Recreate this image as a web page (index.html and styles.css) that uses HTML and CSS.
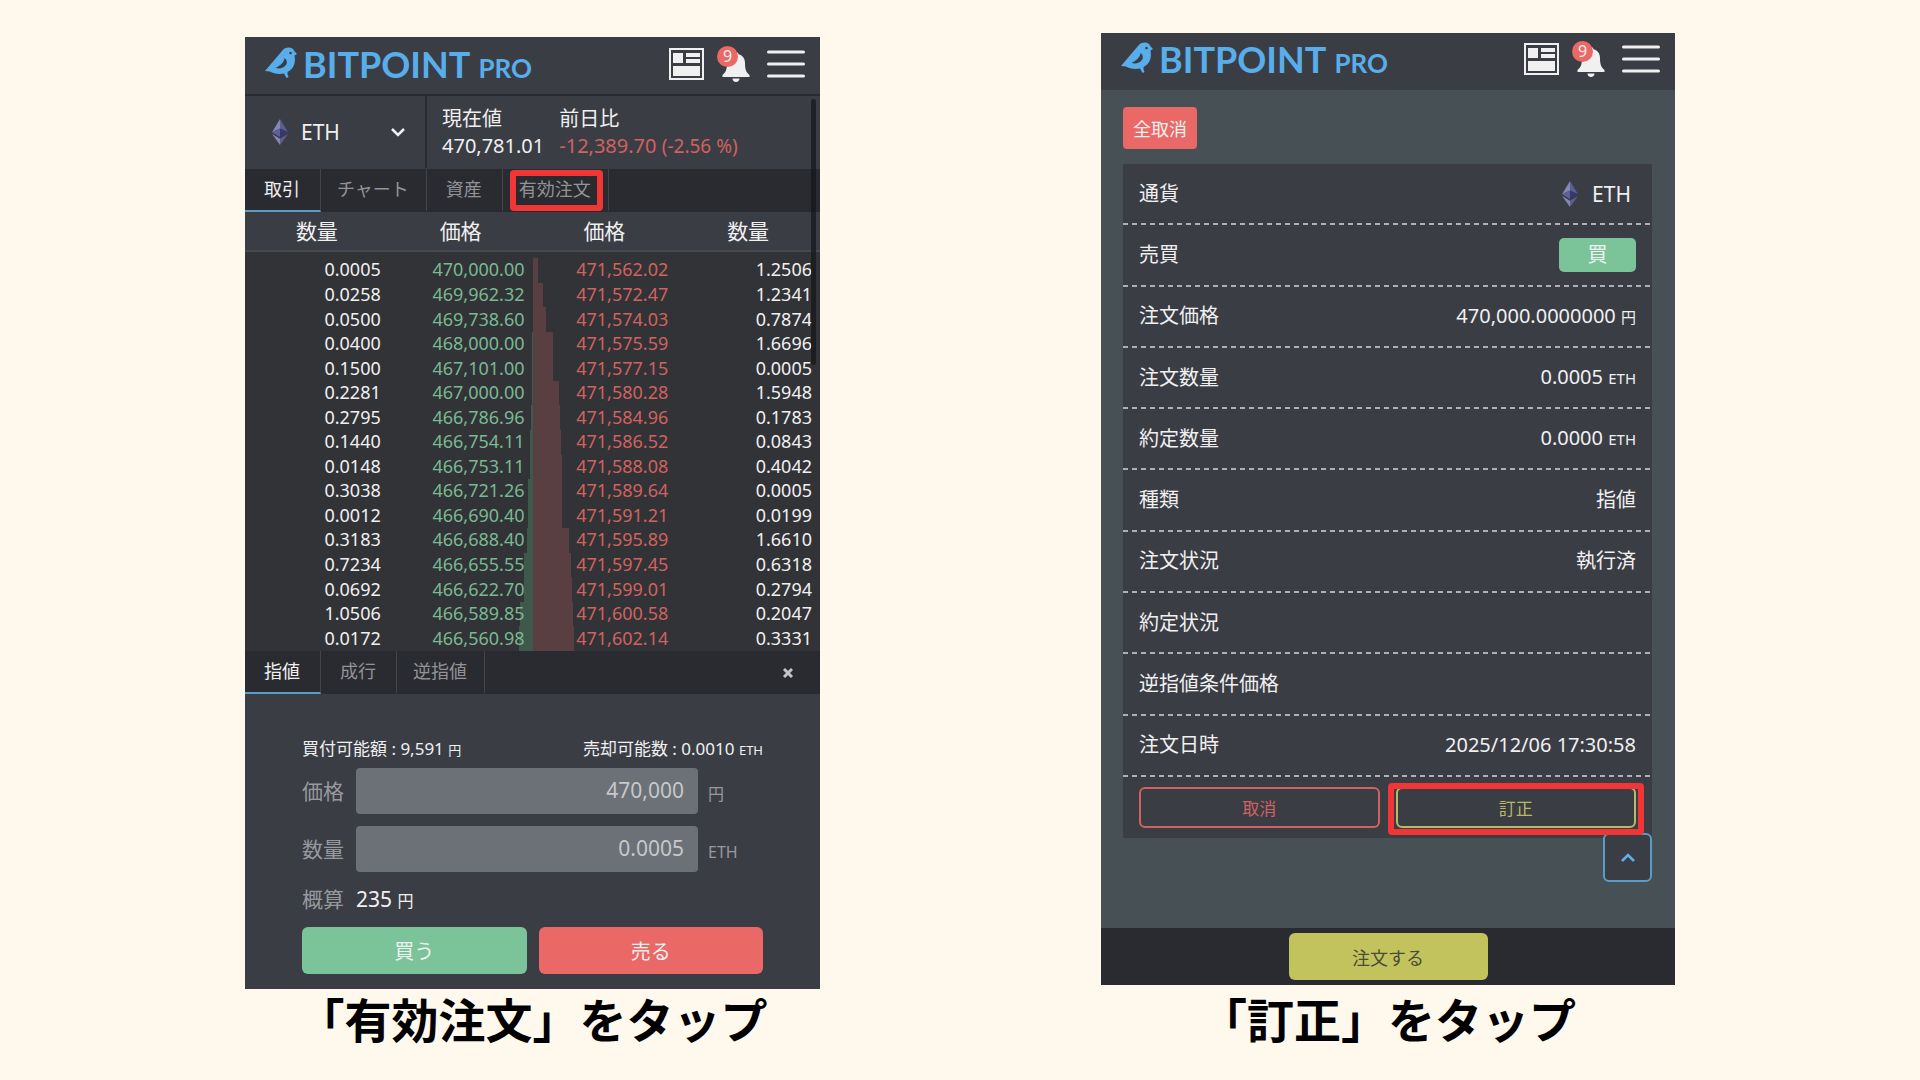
FILE: index.html
```html
<!DOCTYPE html>
<html lang="ja">
<head>
    <meta charset="UTF-8">
    <meta name="viewport" content="width=device-width, initial-scale=1.0">
    <title>BITPOINT PRO 注文の訂正</title>
    <link rel="stylesheet" href="styles.css">
</head>
<body>
    <!-- Shared icons -->
    <svg class="sprite" aria-hidden="true">
        <symbol id="bird" viewBox="0 -1 33 32">
            <path fill-rule="evenodd" d="M0 24 L17 4 C18.500 1.500 21 0.500 24 0.500 C26.500 0.500 28.500 2 29.200 4 L32 7 L29.500 8.500 C31 16 28.500 22 22.500 25 L22.500 27 L23.500 30 L21.500 31 L19 26.500 C14 27.500 8 26.500 5 24.500 Z M19.500 11 C19 15 16 18.500 10.500 20.800 C14 22.500 19 21 21.300 17.500 C22.500 15 21.800 12.500 19.500 11 Z M25.500 4.700 A1.300 1.300 0 1 0 25.600 4.700 Z"/>
        </symbol>
        <symbol id="news" viewBox="0 0 35 32">
            <path fill-rule="evenodd" d="M0 0 H35 V32 H0 Z M2 2 V30 H33 V2 Z"/>
            <path d="M4 5 H14 V15 H4 Z M17 5 H31 V9 H17 Z M17 11 H31 V15 H17 Z M4 18 H31 V28 H4 Z"/>
        </symbol>
        <symbol id="bell" viewBox="0 0 28 30">
            <path d="M14 0 C15.500 0 16.500 1 16.500 2.300 C21 3.500 23 7 23 11 C23 18 24.500 20.500 27.500 23 V25 H0.500 V23 C3.500 20.500 5 18 5 11 C5 7 7 3.500 11.500 2.300 C11.500 1 12.500 0 14 0 Z M10.500 26.500 H17.500 C17.500 28.500 16 30 14 30 C12 30 10.500 28.500 10.500 26.500 Z"/>
        </symbol>
        <symbol id="menu" viewBox="0 0 38 28">
            <path d="M1.500 2 H36.500 M1.500 14 H36.500 M1.500 26 H36.500" stroke="currentColor" stroke-width="3" stroke-linecap="round"/>
        </symbol>
        <symbol id="eth" viewBox="0 0 16 26">
            <path d="M8 0 L0 13.200 L8 9.600 Z" fill="#8587b4"/>
            <path d="M8 0 L16 13.200 L8 9.600 Z" fill="#5c5e95"/>
            <path d="M8 9.600 L0 13.200 L8 18 Z" fill="#5f619b"/>
            <path d="M8 9.600 L16 13.200 L8 18 Z" fill="#37386f"/>
            <path d="M0 15 L8 19.700 V26 Z" fill="#8587b4"/>
            <path d="M16 15 L8 19.700 V26 Z" fill="#5c5e95"/>
        </symbol>
    </svg>

    <main class="steps">
        <figure class="step step-trade">
            <div class="phone">
                <header class="app-header bordered">
                    <a class="logo" href="#">
                        <svg class="logo-bird"><use href="#bird"/></svg>
                        <span class="logo-name">BITPOINT</span>
                        <span class="logo-pro">PRO</span>
                    </a>
                    <button class="icon-button" aria-label="ニュース"><svg class="icon-news"><use href="#news"/></svg></button>
                    <button class="icon-button bell" aria-label="お知らせ"><svg class="icon-bell"><use href="#bell"/></svg><span class="bell-count">9</span></button>
                    <button class="icon-button" aria-label="メニュー"><svg class="icon-menu"><use href="#menu"/></svg></button>
                </header>

                <div class="screen">
                    <div class="ticker">
                        <div class="pair">
                            <svg class="icon-eth"><use href="#eth"/></svg>
                            <select class="pair-select" aria-label="通貨">
                                <option>ETH</option>
                            </select>
                            <svg class="chevron" viewBox="0 0 16 10"><path d="M2 2 L8 8 L14 2"/></svg>
                        </div>
                        <dl class="quote">
                            <dt>現在値</dt>
                            <dd>470,781.01</dd>
                        </dl>
                        <dl class="quote">
                            <dt>前日比</dt>
                            <dd class="down">-12,389.70 <small>(-2.56 %)</small></dd>
                        </dl>
                    </div>

                    <nav class="tabs">
                        <button class="tab active">取引</button>
                        <button class="tab">チャート</button>
                        <button class="tab">資産</button>
                        <button class="tab marked">有効注文</button>
                    </nav>

                    <table class="book">
                        <thead>
                            <tr><th>数量</th><th>価格</th><th>価格</th><th>数量</th></tr>
                        </thead>
                        <tbody id="bookRows"></tbody>
                    </table>
                    <div class="scrollbar"></div>
                </div>

                <nav class="tabs">
                    <button class="tab active">指値</button>
                    <button class="tab">成行</button>
                    <button class="tab">逆指値</button>
                    <button class="tab-close" aria-label="閉じる"><svg viewBox="0 0 10 10"><path d="M1 1 L9 9 M9 1 L1 9"/></svg></button>
                </nav>

                <form class="order-form">
                    <div class="balance">
                        <span>買付可能額 : 9,591 <small>円</small></span>
                        <span>売却可能数 : 0.0010 <small>ETH</small></span>
                    </div>
                    <div class="field">
                        <label for="price">価格</label>
                        <input type="text" id="price" value="470,000">
                        <span class="unit">円</span>
                    </div>
                    <div class="field">
                        <label for="amount">数量</label>
                        <input type="text" id="amount" value="0.0005">
                        <span class="unit">ETH</span>
                    </div>
                    <div class="total">
                        <span class="total-label">概算</span>
                        <span>235 <small>円</small></span>
                    </div>
                    <div class="actions">
                        <button type="button" class="btn buy">買う</button>
                        <button type="button" class="btn sell">売る</button>
                    </div>
                </form>
            </div>
            <figcaption>「有効注文」をタップ</figcaption>
        </figure>

        <figure class="step step-edit">
            <div class="phone">
                <header class="app-header">
                    <a class="logo" href="#">
                        <svg class="logo-bird"><use href="#bird"/></svg>
                        <span class="logo-name">BITPOINT</span>
                        <span class="logo-pro">PRO</span>
                    </a>
                    <button class="icon-button" aria-label="ニュース"><svg class="icon-news"><use href="#news"/></svg></button>
                    <button class="icon-button bell" aria-label="お知らせ"><svg class="icon-bell"><use href="#bell"/></svg><span class="bell-count">9</span></button>
                    <button class="icon-button" aria-label="メニュー"><svg class="icon-menu"><use href="#menu"/></svg></button>
                </header>

                <div class="orders">
                    <button class="cancel-all">全取消</button>
                    <section class="order-card">
                        <dl class="details">
                            <div class="detail"><dt>通貨</dt><dd class="coin"><svg class="icon-eth"><use href="#eth"/></svg>ETH</dd></div>
                            <div class="detail"><dt>売買</dt><dd class="side">買</dd></div>
                            <div class="detail"><dt>注文価格</dt><dd>470,000.0000000 <small>円</small></dd></div>
                            <div class="detail"><dt>注文数量</dt><dd>0.0005 <small>ETH</small></dd></div>
                            <div class="detail"><dt>約定数量</dt><dd>0.0000 <small>ETH</small></dd></div>
                            <div class="detail"><dt>種類</dt><dd>指値</dd></div>
                            <div class="detail"><dt>注文状況</dt><dd>執行済</dd></div>
                            <div class="detail"><dt>約定状況</dt><dd></dd></div>
                            <div class="detail"><dt>逆指値条件価格</dt><dd></dd></div>
                            <div class="detail"><dt>注文日時</dt><dd>2025/12/06 17:30:58</dd></div>
                        </dl>
                        <div class="card-actions">
                            <button class="outline cancel">取消</button>
                            <button class="outline edit marked">訂正</button>
                        </div>
                        <button class="to-top" aria-label="上へ戻る"><svg class="chevron" viewBox="0 0 16 10"><path d="M2 8 L8 2 L14 8"/></svg></button>
                    </section>
                </div>

                <footer class="app-footer">
                    <button class="btn order">注文する</button>
                </footer>
            </div>
            <figcaption>「訂正」をタップ</figcaption>
        </figure>
    </main>

    <script>
        // 買数量, 買価格, 売価格, 売数量, 買の厚み(px), 売の厚み(px)
        const book = [
            ['0.0005', '470,000.00', '471,562.02', '1.2506', 0, 5],
            ['0.0258', '469,962.32', '471,572.47', '1.2341', 0, 10],
            ['0.0500', '469,738.60', '471,574.03', '0.7874', 0, 13],
            ['0.0400', '468,000.00', '471,575.59', '1.6696', 1, 20],
            ['0.1500', '467,101.00', '471,577.15', '0.0005', 1, 20],
            ['0.2281', '467,000.00', '471,580.28', '1.5948', 1, 26],
            ['0.2795', '466,786.96', '471,584.96', '0.1783', 2, 27],
            ['0.1440', '466,754.11', '471,586.52', '0.0843', 3, 28],
            ['0.0148', '466,753.11', '471,588.08', '0.4042', 3, 29],
            ['0.3038', '466,721.26', '471,589.64', '0.0005', 5, 29],
            ['0.0012', '466,690.40', '471,591.21', '0.0199', 5, 29],
            ['0.3183', '466,688.40', '471,595.89', '1.6610', 6, 36],
            ['0.7234', '466,655.55', '471,597.45', '0.6318', 9, 38],
            ['0.0692', '466,622.70', '471,599.01', '0.2794', 9, 39],
            ['1.0506', '466,589.85', '471,600.58', '0.2047', 13, 40],
            ['0.0172', '466,560.98', '471,602.14', '0.3331', 14, 41]
        ];

        document.getElementById('bookRows').innerHTML = book.map(row => `
            <tr>
                <td>${row[0]}</td>
                <td class="bid"><i class="depth" style="width: ${row[4]}px"></i><span>${row[1]}</span></td>
                <td class="ask"><i class="depth" style="width: ${row[5]}px"></i><span>${row[2]}</span></td>
                <td>${row[3]}</td>
            </tr>
        `).join('');
    </script>
</body>
</html>
```

FILE: styles.css
```css
* {
    margin: 0;
    padding: 0;
    box-sizing: border-box;
}

body {
    font-family: 'Noto Sans', 'Noto Sans CJK JP', sans-serif;
    background: #fff8ec;
    color: #f0f0f1;
    min-height: 100vh;
}

button,
input,
select {
    font-family: inherit;
    color: inherit;
    background: none;
    border: none;
}

button {
    cursor: pointer;
}

svg {
    display: block;
}

.sprite {
    position: absolute;
    width: 0;
    height: 0;
}

.steps {
    display: flex;
    justify-content: center;
    align-items: flex-start;
    gap: 281px;
}

.step {
    flex: 1 1 0;
    max-width: 575px;
}

.step-trade {
    padding-top: 37px;
}

.step-edit {
    max-width: 574px;
    padding-top: 33px;
}

.phone {
    background: #3b3d45;
}

figcaption {
    color: #000;
    font-size: 47px;
    font-weight: 700;
    line-height: 62px;
    text-align: center;
    white-space: nowrap;
}

.step-edit figcaption {
    margin-top: 4px;
}

/* Header */
.app-header {
    display: flex;
    align-items: center;
    height: 57px;
    padding: 0 15px 6px 20px;
}

.app-header.bordered {
    height: 59px;
    padding-bottom: 4px;
    border-bottom: 2px solid #292a2f;
}

.logo {
    display: flex;
    align-items: baseline;
    flex: 1;
    padding-top: 5px;
    color: #58aeea;
    font-family: Lato, sans-serif;
    line-height: 40px;
    text-decoration: none;
}

.logo-bird {
    width: 33px;
    height: 32px;
    fill: currentColor;
    margin: 0 5px -2px 0;
}

.logo-name {
    font-size: 36px;
    font-weight: 700;
    margin-right: 8px;
}

.logo-pro {
    font-size: 26px;
    font-weight: 700;
}

.icon-button {
    color: #f0f0f0;
    fill: currentColor;
}

.icon-news {
    width: 35px;
    height: 32px;
}

.bell {
    position: relative;
    margin: 0 17px 0 18px;
}

.icon-bell {
    width: 28px;
    height: 30px;
    margin-top: 6px;
}

.bell-count {
    position: absolute;
    top: 0;
    left: -5px;
    width: 21px;
    height: 21px;
    border-radius: 50%;
    background: #ea6865;
    font-size: 16px;
    line-height: 21px;
    text-align: center;
}

.icon-menu {
    width: 38px;
    height: 28px;
}

/* Trade screen */
.screen {
    position: relative;
}

.scrollbar {
    position: absolute;
    top: 3px;
    right: 4px;
    width: 5px;
    height: 266px;
    border-radius: 3px;
    background: rgba(20, 21, 26, 0.7);
}

.ticker {
    display: flex;
    align-items: center;
    gap: 15px;
    height: 73px;
    padding-bottom: 1px;
}

.pair {
    display: flex;
    align-items: center;
    align-self: stretch;
    width: 182px;
    padding: 0 19px 0 27px;
    border-right: 2px solid #292a2f;
}

.icon-eth {
    width: 16px;
    height: 26px;
}

.pair-select {
    flex: 1;
    appearance: none;
    font-size: 21px;
    line-height: 30px;
    padding-left: 13px;
    outline: none;
}

.chevron {
    width: 16px;
    height: 10px;
    fill: none;
    stroke: currentColor;
    stroke-width: 2.500;
}

.quote {
    font-size: 20px;
    line-height: 27px;
    white-space: nowrap;
}

.quote small {
    font-size: 19px;
}

.down {
    color: #d0625f;
}

.tabs {
    display: flex;
    height: 43px;
    background: #2a2b30;
}

.tab {
    min-width: 76px;
    padding: 0 17px 1px 16px;
    border-right: 1px solid #43454b;
    border-bottom: 2px solid transparent;
    color: #929397;
    font-size: 18px;
    line-height: 36px;
    white-space: nowrap;
}

.tab.active {
    color: #f0f0f1;
    border-bottom-color: #5a9cc8;
}

.marked {
    position: relative;
}

.marked::after {
    content: '';
    position: absolute;
    border: 6px solid #f23636;
    border-radius: 4px;
}

.tab.marked::after {
    inset: 1px 5px -1px 7px;
}

.tab-close {
    margin-left: auto;
    padding: 0 27px;
}

.tab-close svg {
    width: 10px;
    height: 10px;
    stroke: #c4c5c8;
    stroke-width: 3;
}

.book {
    width: 100%;
    height: 439px;
    table-layout: fixed;
    border-collapse: collapse;
    background: #323337;
}

.book thead {
    background: #3b3d45;
}

.book th {
    height: 39px;
    border-bottom: 2px solid #47494e;
    font-size: 21px;
    font-weight: 400;
    line-height: 34px;
}

.book tbody::before {
    content: '';
    display: block;
    height: 6px;
}

.book td {
    position: relative;
    padding: 0 8px 1px 0;
    font-size: 18px;
    line-height: 23px;
    text-align: right;
}

.book td span {
    position: relative;
}

.bid {
    color: #79b893;
}

.ask {
    color: #d0625f;
}

.depth {
    position: absolute;
    top: 0;
    bottom: 0;
}

.bid .depth {
    right: 0;
    background: #3f584e;
}

.ask .depth {
    left: 0;
    background: #593f41;
}

/* Order form */
.order-form {
    padding: 41px 57px 15px;
}

.balance {
    display: flex;
    justify-content: space-between;
    margin-bottom: 4px;
    font-size: 17px;
    line-height: 28px;
    white-space: nowrap;
}

.balance small {
    font-size: 13px;
}

.field {
    display: flex;
    align-items: center;
    margin-bottom: 12px;
    color: #97999d;
}

.field label,
.total-label {
    width: 54px;
    color: #97999d;
    font-size: 21px;
    line-height: 30px;
}

.field input {
    flex: 1;
    min-width: 0;
    height: 46px;
    padding: 0 14px 2px;
    border-radius: 4px;
    background: #6c7178;
    color: #c6c8cb;
    font-size: 21px;
    text-align: right;
}

.unit {
    width: 65px;
    padding: 6px 0 0 10px;
    font-size: 16px;
    line-height: 24px;
}

.total {
    display: flex;
    font-size: 21px;
    line-height: 30px;
}

.total small {
    font-size: 16px;
}

.actions {
    display: flex;
    gap: 12px;
    margin-top: 11px;
}

.btn {
    height: 47px;
    border-radius: 6px;
    font-size: 20px;
}

.actions .btn {
    flex: 1;
}

.buy {
    background: #7bc49a;
}

.sell {
    background: #ea6865;
}

/* Order list screen */
.orders {
    padding: 17px 23px 90px 22px;
    background: #475055;
}

.cancel-all {
    display: block;
    height: 42px;
    padding: 0 10px;
    border-radius: 4px;
    background: #ea6865;
    font-size: 18px;
}

.order-card {
    position: relative;
    margin-top: 15px;
    background: #3b3d45;
}

.details {
    display: grid;
    grid-auto-rows: 1fr;
    height: 613px;
}

.detail {
    display: flex;
    align-items: center;
    justify-content: space-between;
    padding: 0 16px 2px;
    font-size: 20px;
    line-height: 30px;
    background: repeating-linear-gradient(90deg, #aeb0b3 0 5px, transparent 5px 9px) left bottom / 100% 2px no-repeat;
}

.detail small {
    font-size: 15px;
}

.coin {
    display: flex;
    align-items: center;
    gap: 14px;
    padding-right: 5px;
    font-size: 21px;
}

.side {
    width: 77px;
    height: 34px;
    border-radius: 5px;
    background: #7bc49a;
    line-height: 34px;
    text-align: center;
}

.card-actions {
    display: flex;
    gap: 16px;
    padding: 10px 16px;
}

.outline {
    flex: 1;
    height: 41px;
    border: 2px solid currentColor;
    border-radius: 6px;
    font-size: 17px;
}

.cancel {
    color: #d0625f;
}

.edit {
    color: #b9ba66;
    z-index: 2;
}

.edit.marked::after {
    inset: -6px -10px -9px;
}

.to-top {
    position: absolute;
    right: 0;
    bottom: -44px;
    display: flex;
    align-items: center;
    justify-content: center;
    width: 49px;
    height: 49px;
    border: 2px solid #5a9cc8;
    border-radius: 6px;
    background: #3b3d45;
    color: #5fb0ea;
}

.app-footer {
    display: flex;
    justify-content: center;
    padding: 5px;
    background: #2a2b30;
}

.order {
    width: 199px;
    background: #c2c35c;
    color: #4b4b3a;
    font-size: 18px;
}

@media (max-width: 1500px) {
    .steps {
        gap: 40px;
    }
}

@media (max-width: 1100px) {
    .steps {
        flex-direction: column;
        align-items: center;
    }
    .step {
        width: 100%;
    }
}
```
